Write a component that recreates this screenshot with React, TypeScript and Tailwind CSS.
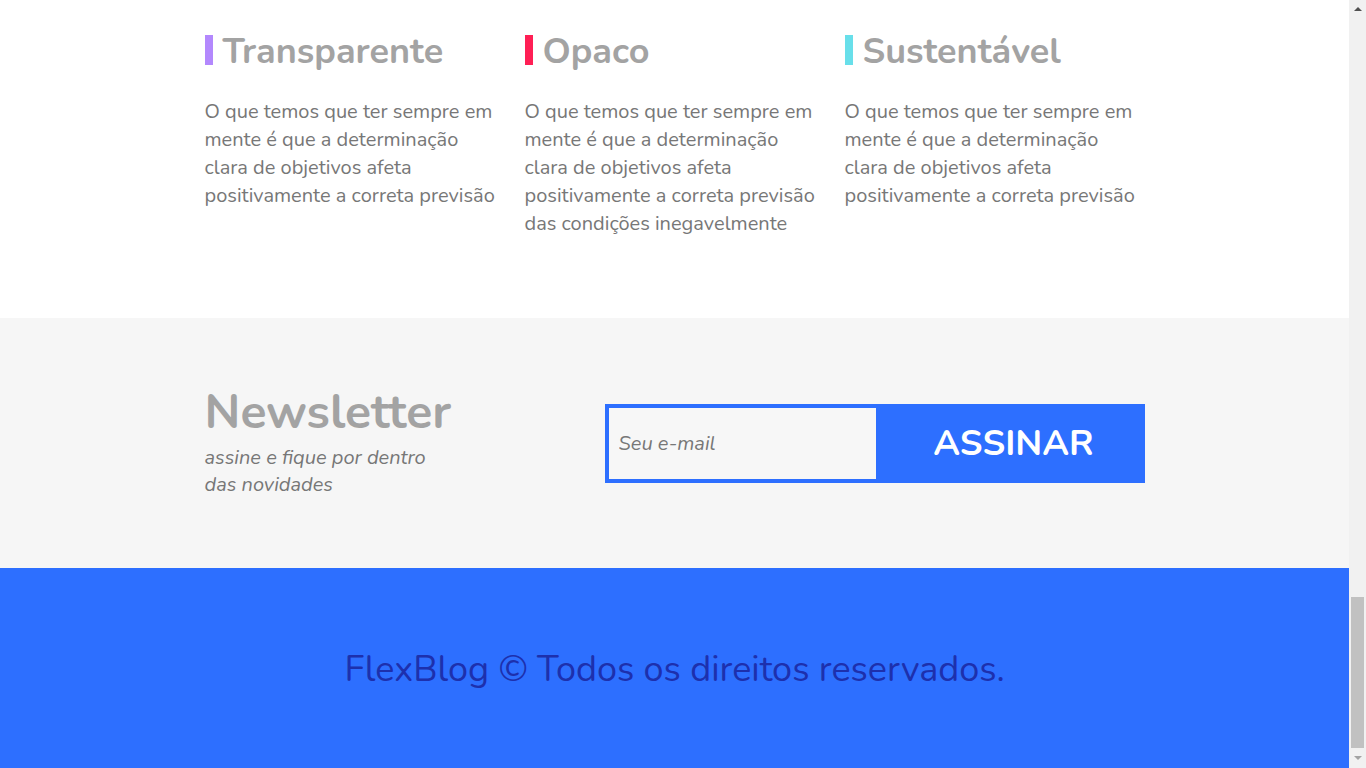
const features = [
  {
    title: "Transparente",
    bar: "bg-[#b388fd]",
    text: "O que temos que ter sempre em mente é que a determinação clara de objetivos afeta positivamente a correta previsão",
  },
  {
    title: "Opaco",
    bar: "bg-[#ff1f55]",
    text: "O que temos que ter sempre em mente é que a determinação clara de objetivos afeta positivamente a correta previsão das condições inegavelmente",
  },
  {
    title: "Sustentável",
    bar: "bg-[#68dfea]",
    text: "O que temos que ter sempre em mente é que a determinação clara de objetivos afeta positivamente a correta previsão",
  },
];

function Scrollbar() {
  return (
    <div className="w-[17px] h-screen bg-[#f1f1f1] flex flex-col items-center">
      <div className="h-[17px] flex items-center justify-center">
        <span className="w-0 h-0 border-x-[4px] border-x-transparent border-b-[4px] border-b-[#505050]" />
      </div>
      <div className="flex-1" />
      <div className="w-[13px] h-[151px] bg-[#c1c1c1]" />
      <div className="h-[20px] flex items-center justify-center">
        <span className="w-0 h-0 border-x-[4px] border-x-transparent border-t-[4px] border-t-[#a3a3a3]" />
      </div>
    </div>
  );
}

export default function App() {
  return (
    <div className="flex h-screen overflow-hidden font-['Nunito','Lato',sans-serif]">
      <main className="w-[1349px]">
        {/* features */}
        <section className="bg-white h-[318px] pt-[35px]">
          <div className="w-[940px] mx-auto flex">
            {features.map((f) => (
              <div key={f.title} className="w-[320px] shrink-0 pr-[22px]">
                <div className="flex items-center gap-[10px] h-[30px]">
                  <span className={"w-2 h-[30px] " + f.bar} />
                  <h2 className="pt-[4px] text-[36px] font-bold text-[#a3a3a3] leading-none">
                    {f.title}
                  </h2>
                </div>
                <p className="mt-[33px] text-[20px] leading-[28px] text-[#777]">
                  {f.text}
                </p>
              </div>
            ))}
          </div>
        </section>

        {/* newsletter */}
        <section className="bg-[#f6f6f6] h-[250px]">
          <div className="w-[940px] mx-auto flex items-start justify-between">
            <div className="pt-[70px]">
              <h2 className="text-[48px] font-bold text-[#a3a3a3] leading-[48px]">
                Newsletter
              </h2>
              <p className="mt-2 text-[20px] italic text-[#777] leading-[27px] w-[240px]">
                assine e fique por dentro das novidades
              </p>
            </div>
            <form className="mt-[86px] flex w-[540px] h-[79px]">
              <input
                type="email"
                placeholder="Seu e-mail"
                className="w-[275px] shrink-0 h-full border-4 border-[#2d6fff] bg-[#f7f7f7] px-[10px] text-[20px] italic text-[#777] placeholder:text-[#777] outline-none"
              />
              <button
                type="button"
                className="flex-1 h-full bg-[#2d6fff] text-white text-[36px] font-bold pl-[3px]"
              >
                ASSINAR
              </button>
            </form>
          </div>
        </section>

        {/* footer */}
        <footer className="bg-[#2d6fff] h-[200px] pt-[4px] flex items-center justify-center">
          <p className="text-[36px] text-[#1d30ad]">
            FlexBlog © Todos os direitos reservados.
          </p>
        </footer>
      </main>
      <Scrollbar />
    </div>
  );
}
